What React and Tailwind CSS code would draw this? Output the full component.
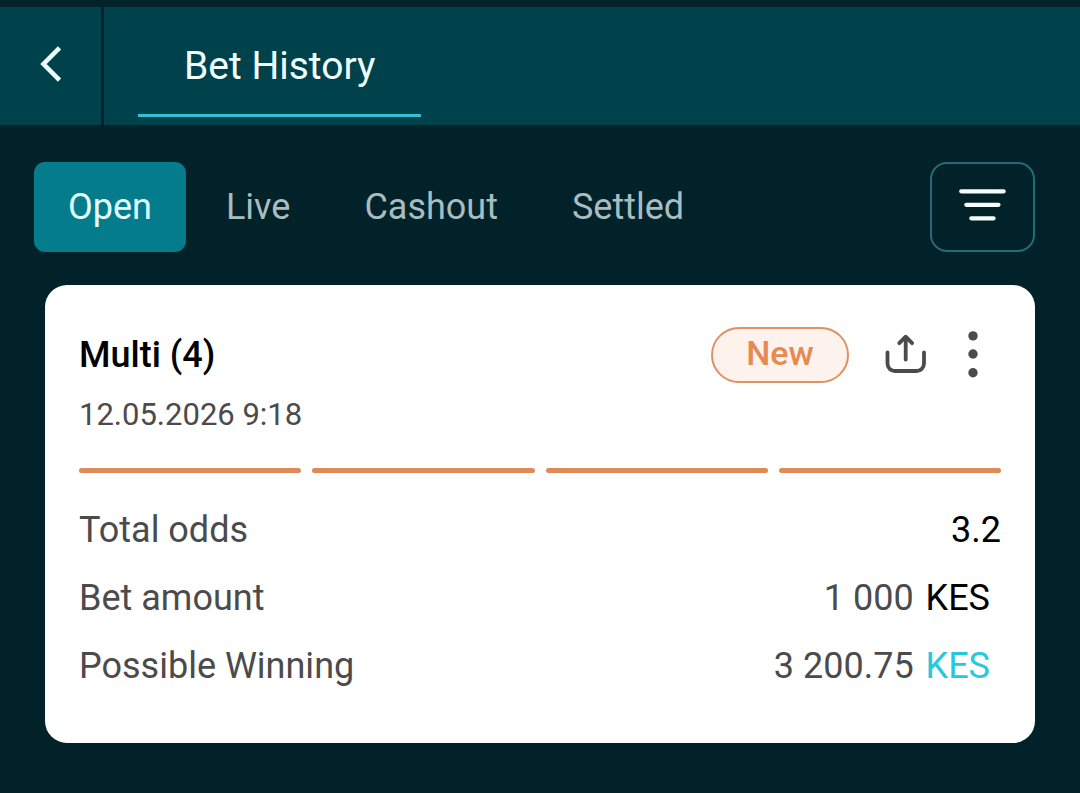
import { useState } from 'react';

const FILTERS = ['Open', 'Live', 'Cashout', 'Settled'];

const bet = {
  title: 'Multi (4)',
  date: '12.05.2026 9:18',
  status: 'New',
  legs: 4,
  odds: '3.2',
  amount: '1 000',
  winning: '3 200.75',
  currency: 'KES',
};

function Header() {
  return (
    <header className="flex h-[118px] bg-[#00424b]">
      <button
        type="button"
        aria-label="Back"
        className="flex w-[104px] items-center border-r-[3px] border-[#002228] pl-[38px]"
      >
        <svg width="26" height="40" viewBox="0 0 26 40" fill="none" stroke="#f0ffff" strokeWidth="4.6">
          <path d="M21.500 1.800 5.500 18 21.500 34.200" />
        </svg>
      </button>
      <nav className="flex pb-2 pl-[34px]">
        <a
          href="#history"
          className="flex items-center border-b-[3px] border-[#35bfd6] px-[46px] pt-3 text-[39px] text-[#f0ffff]"
        >
          Bet History
        </a>
      </nav>
    </header>
  );
}

function Filters() {
  const [active, setActive] = useState('Open');

  return (
    <div className="flex items-center justify-between pt-[37px] pr-[45px] pl-[34px]">
      <div className="flex gap-[6px]">
        {FILTERS.map(name => (
          <button
            key={name}
            type="button"
            onClick={() => setActive(name)}
            className={
              name === active
                ? 'h-[90px] rounded-[11px] bg-[#057c8c] px-[34px] text-[36px] text-[#e2ffff]'
                : 'h-[90px] rounded-[11px] px-[34px] text-[36px] text-[#a9bcc1]'
            }
          >
            {name}
          </button>
        ))}
      </div>
      <button
        type="button"
        aria-label="Filter"
        className="flex h-[90px] w-[105px] items-center justify-center rounded-[17px] border-2 border-[#246b77]"
      >
        <svg width="48" height="36" viewBox="0 0 48 36" fill="none" stroke="#f5ffff" strokeWidth="4.2" strokeLinecap="round">
          <path d="M2.200 2.300h42.500M7.300 15.800h32.200M12.300 29.300h22.300" />
        </svg>
      </button>
    </div>
  );
}

function Row({ label, children }) {
  return (
    <div className="flex justify-between">
      <dt>{label}</dt>
      <dd>{children}</dd>
    </div>
  );
}

function BetCard({ bet }) {
  return (
    <article className="mx-[45px] mt-[33px] rounded-[22px] bg-white px-[34px] pt-[42px] pb-[50px] text-[#4b4b4b]">
      <div className="flex items-center justify-between">
        <h2 className="text-[36px] font-medium text-black">{bet.title}</h2>
        <div className="flex items-center">
          <span className="flex h-14 w-[138px] items-center justify-center rounded-full border-2 border-[#dd9261] bg-[#fef2ec] pb-1 text-[34px] leading-none font-medium text-[#e58a50]">
            {bet.status}
          </span>
          <button type="button" aria-label="Share" className="ml-9">
            <svg width="42" height="42" viewBox="0 0 42 42" fill="none" stroke="#4b4b4b" strokeWidth="3.8" strokeLinecap="round" strokeLinejoin="round">
              <path d="M2.500 18.500V29.500a7.500 7.500 0 0 0 7.500 7.500h21.500a7.500 7.500 0 0 0 7.500-7.500V18.500" />
              <path d="M20.700 25.500V3M14.300 9.200 20.700 2.700 27.100 9.200" />
            </svg>
          </button>
          <button type="button" aria-label="More" className="mr-[23px] ml-[41px]">
            <svg width="10" height="48" viewBox="0 0 10 48" fill="#4b4b4b">
              <circle cx="5" cy="4.900" r="4.700" />
              <circle cx="5" cy="23" r="4.700" />
              <circle cx="5" cy="41.700" r="4.700" />
            </svg>
          </button>
        </div>
      </div>
      <p className="mt-[9px] text-[31px]">{bet.date}</p>

      {/* One bar per leg */}
      <div className="mt-[29px] flex gap-[11px]">
        {Array.from({ length: bet.legs }, (_, i) => (
          <span key={i} className="h-[5px] flex-1 rounded-full bg-[#dd8c58]" />
        ))}
      </div>

      <dl className="mt-[30px] flex flex-col gap-[14px] text-[36px]">
        <Row label="Total odds">
          <span className="text-black">{bet.odds}</span>
        </Row>
        <Row label="Bet amount">
          {bet.amount} <span className="mr-[11px] ml-[3px] text-black">{bet.currency}</span>
        </Row>
        <Row label="Possible Winning">
          {bet.winning} <span className="mr-[11px] ml-[3px] text-[#25c9dd]">{bet.currency}</span>
        </Row>
      </dl>
    </article>
  );
}

export default function App() {
  return (
    <main className="min-h-screen bg-[#002228] pt-[7px] font-['Roboto',sans-serif]">
      <Header />
      <Filters />
      <BetCard bet={bet} />
    </main>
  );
}
